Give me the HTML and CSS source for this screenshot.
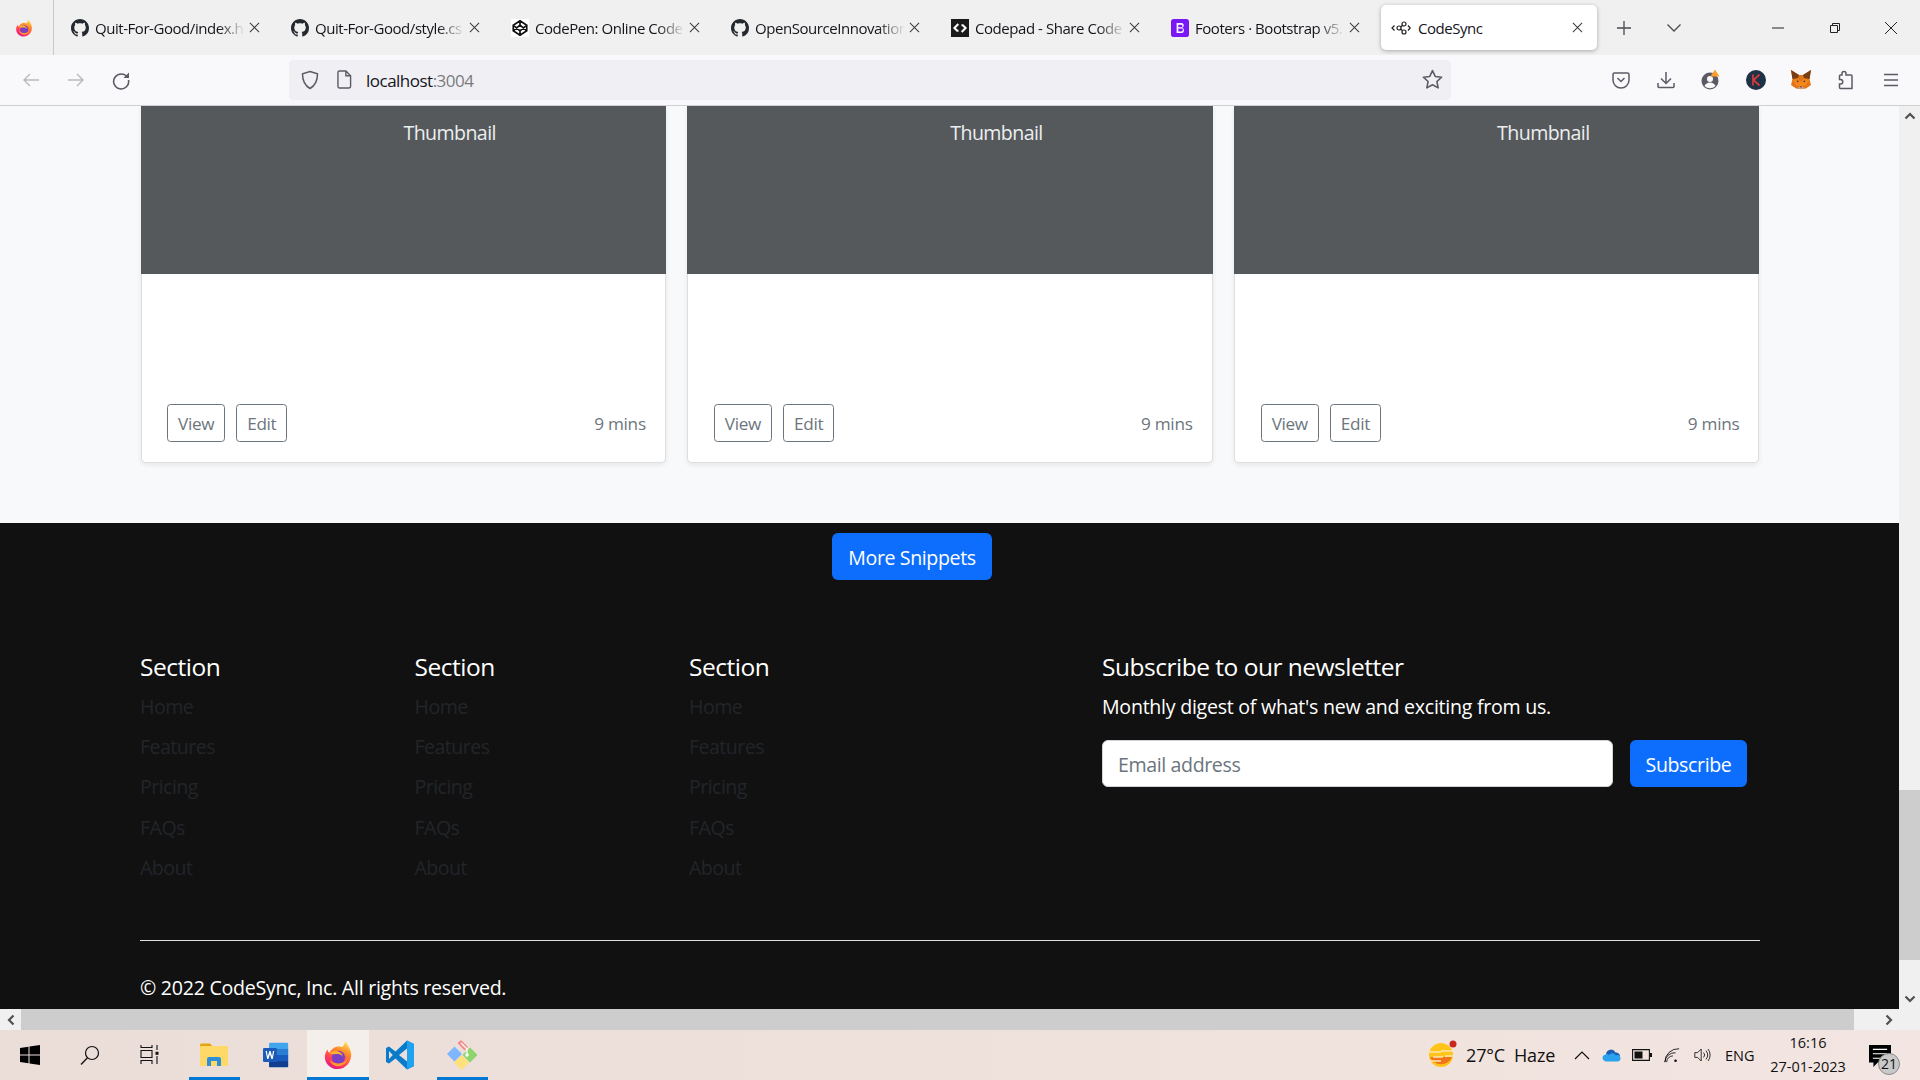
FILE: index.html
```html
<!DOCTYPE html>
<html lang="en">
<head>
<meta charset="utf-8">
<title>CodeSync</title>
<link rel="stylesheet" href="styles.css">
</head>
<body>
<svg class="defs" width="0" height="0" aria-hidden="true">
  <defs>
    <linearGradient id="ffg" x1="0.75" y1="0" x2="0.3" y2="1">
      <stop offset="0" stop-color="#ffe14d"/><stop offset="0.35" stop-color="#ff8a2a"/><stop offset="0.72" stop-color="#ff3d5a"/><stop offset="1" stop-color="#e31587"/>
    </linearGradient>
    <symbol id="gh" viewBox="0 0 16 16"><path fill="#24292f" d="M8 0C3.58 0 0 3.58 0 8c0 3.54 2.29 6.53 5.47 7.59.4.07.55-.17.55-.38 0-.19-.01-.82-.01-1.49-2.01.37-2.53-.49-2.69-.94-.09-.23-.48-.94-.82-1.13-.28-.15-.68-.52-.01-.53.63-.01 1.08.58 1.23.82.72 1.21 1.87.87 2.33.66.07-.52.28-.87.51-1.07-1.78-.2-3.64-.89-3.64-3.95 0-.87.31-1.59.82-2.15-.08-.2-.36-1.02.08-2.12 0 0 .67-.21 2.2.82.64-.18 1.32-.27 2-.27s1.36.09 2 .27c1.53-1.04 2.2-.82 2.2-.82.44 1.1.16 1.92.08 2.12.51.56.82 1.27.82 2.15 0 3.07-1.87 3.75-3.65 3.95.29.25.54.73.54 1.48 0 1.07-.01 1.93-.01 2.2 0 .21.15.46.55.38A8 8 0 0 0 16 8c0-4.42-3.58-8-8-8z"/></symbol>
    <symbol id="x" viewBox="0 0 12 12"><path d="M1 1l10 10M11 1L1 11" stroke="#3a3a3c" stroke-width="1.1" fill="none"/></symbol>
    <symbol id="ff" viewBox="0 0 32 32">
      <path fill="url(#ffg)" d="M24 1c.5 3 5 6 6 13 1 9-6 17-14.500 17C8 31 2 25 2 18c0-3 1-6 3-8 0 2 1 3 2 3.500C9 9 14 6 18 7c3 1 4 0 6-6z"/>
      <circle cx="16.500" cy="18.500" r="7" fill="#7a3fc4"/>
      <path fill="#ffb02a" d="M7 14c3-3 8-3 11-1 2 1 3 3 3 5-1-2-3-3-5-3-3 0-6 1-9-1z"/>
      <path fill="#ff9a2a" d="M7 21c1 4 5 7 9 7 5 0 9-3 10-8-2 3-5 5-9 5-4 0-7-1-10-4z"/>
    </symbol>
  </defs>
</svg>

<div class="tabbar">
  <div class="ff-cell"><svg class="i18" viewBox="0 0 32 32"><use href="#ff"/></svg></div>
  <div class="tab"><svg class="fav" viewBox="0 0 16 16"><use href="#gh"/></svg><span class="tab-title">Quit-For-Good/index.h</span><svg class="tab-x" viewBox="0 0 12 12"><use href="#x"/></svg></div>
  <div class="tab"><svg class="fav" viewBox="0 0 16 16"><use href="#gh"/></svg><span class="tab-title">Quit-For-Good/style.cs</span><svg class="tab-x" viewBox="0 0 12 12"><use href="#x"/></svg></div>
  <div class="tab"><svg class="fav" viewBox="0 0 16 16"><rect width="16" height="16" fill="#fff"/><path d="M8 1.500l6 4v5l-6 4-6-4v-5z M8 1.500v4 M8 10.500v4 M2 5.500l6 5 6-5 M2 10.500l6-5 6 5" fill="none" stroke="#111" stroke-width="1.500"/></svg><span class="tab-title">CodePen: Online Code</span><svg class="tab-x" viewBox="0 0 12 12"><use href="#x"/></svg></div>
  <div class="tab"><svg class="fav" viewBox="0 0 16 16"><use href="#gh"/></svg><span class="tab-title">OpenSourceInnovation</span><svg class="tab-x" viewBox="0 0 12 12"><use href="#x"/></svg></div>
  <div class="tab"><svg class="fav" viewBox="0 0 16 16"><rect width="16" height="16" fill="#1a1a1a"/><path d="M6.500 4.500L3 8l2.500 2.500h1.200M9.500 11.500L13 8l-2.500-2.500H9.300" fill="none" stroke="#fff" stroke-width="1.800"/></svg><span class="tab-title">Codepad - Share Code</span><svg class="tab-x" viewBox="0 0 12 12"><use href="#x"/></svg></div>
  <div class="tab"><svg class="fav" viewBox="0 0 16 16"><rect width="16" height="16" rx="2.500" fill="#7a18f5"/><path d="M5 3.500h4a2.200 2.200 0 0 1 .8 4.300A2.400 2.400 0 0 1 9.300 12.500H5zM6.500 5v2.300H9a1.150 1.150 0 0 0 0-2.300zM6.500 8.500V11H9.300a1.250 1.250 0 0 0 0-2.500z" fill="#fff" fill-rule="evenodd"/></svg><span class="tab-title">Footers · Bootstrap v5.</span><svg class="tab-x" viewBox="0 0 12 12"><use href="#x"/></svg></div>
  <div class="tab tab-active"><svg class="fav" viewBox="0 0 20 16"><g fill="none" stroke="#222" stroke-width="1.200"><circle cx="8" cy="8" r="2"/><circle cx="13" cy="4" r="2"/><circle cx="13" cy="12" r="2"/><path d="M9.700 7l1.700-1.700M9.700 9l1.700 1.700M3.500 5.500L1 8l2.500 2.500M17 5.500L19.200 8 17 10.500"/></g></svg><span class="tab-title tab-title-plain">CodeSync</span><svg class="tab-x" viewBox="0 0 12 12"><use href="#x"/></svg></div>
  <div class="tab-tool tool-plus"><svg class="i14" viewBox="0 0 14 14"><path d="M7 0v14M0 7h14" stroke="#4a4a4f" stroke-width="1.300"/></svg></div>
  <div class="tab-tool"><svg class="i14" viewBox="0 0 14 14"><path d="M.5 3.500L7 10l6.500-6.500" stroke="#4a4a4f" stroke-width="1.300" fill="none"/></svg></div>
  <div class="win-btns">
    <div class="win-btn"><svg class="i14" viewBox="0 0 14 14"><path d="M1 7h12" stroke="#222" stroke-width="1"/></svg></div>
    <div class="win-btn"><svg class="i14" viewBox="0 0 14 14"><path d="M2.500 4.500h7v7h-7zM4.500 4.500v-2h7v7h-2" stroke="#222" stroke-width="1" fill="none"/></svg></div>
    <div class="win-btn"><svg class="i14" viewBox="0 0 14 14"><path d="M1 1l12 12M13 1L1 13" stroke="#222" stroke-width="1"/></svg></div>
  </div>
</div>

<div class="toolbar">
  <div class="tb-btn"><svg class="i20" viewBox="0 0 20 20"><path d="M18 10H3M9 4l-6 6 6 6" stroke="#b9b9bd" stroke-width="1.400" fill="none"/></svg></div>
  <div class="tb-btn"><svg class="i20" viewBox="0 0 20 20"><path d="M2 10h15M11 4l6 6-6 6" stroke="#b9b9bd" stroke-width="1.400" fill="none"/></svg></div>
  <div class="tb-btn"><svg class="i20" viewBox="0 0 20 20"><path d="M16.500 7.500A7.500 7.500 0 1 0 17.500 10" stroke="#5b5b66" stroke-width="1.600" fill="none"/><path d="M18 2.500V8h-5.500z" fill="#5b5b66"/></svg></div>
  <div class="urlbar">
    <svg class="url-shield" viewBox="0 0 20 20"><path d="M10 1.500l7.500 2.300c0 7-2 11.700-7.500 14.700C4.500 15.500 2.500 10.800 2.500 3.800z" fill="none" stroke="#5b5b66" stroke-width="1.500"/></svg>
    <svg class="url-page" viewBox="0 0 16 20"><path d="M2.500 1h7l5 5v11a2 2 0 0 1-2 2h-10a1.500 1.500 0 0 1-1.500-1.500V2.500A1.500 1.500 0 0 1 2.500 1zM9.500 1v5h5" fill="none" stroke="#5b5b66" stroke-width="1.500"/></svg>
    <span class="url-text">localhost<span class="url-port">:3004</span></span>
    <svg class="url-star" viewBox="0 0 20 20"><path d="M10 1.500l2.600 5.600 6.100.7-4.500 4.100 1.200 6.100-5.400-3-5.400 3 1.200-6.100L1.300 7.800l6.100-.7z" fill="none" stroke="#5b5b66" stroke-width="1.500" stroke-linejoin="round"/></svg>
  </div>
  <div class="tb-right">
    <div class="tb-btn"><svg class="i18" viewBox="0 0 18 18"><path d="M2.500 2h13A1.500 1.500 0 0 1 17 3.500V9A8 8 0 0 1 1 9V3.500A1.500 1.500 0 0 1 2.500 2z" fill="none" stroke="#5b5b66" stroke-width="1.500"/><path d="M5.500 7L9 10.500 12.500 7" fill="none" stroke="#5b5b66" stroke-width="1.500"/></svg></div>
    <div class="tb-btn"><svg class="i20" viewBox="0 0 20 20"><path d="M10 2v11M5 8.500l5 5 5-5M2 13v3.500a1 1 0 0 0 1 1h14a1 1 0 0 0 1-1V13" stroke="#5b5b66" stroke-width="1.500" fill="none"/></svg></div>
    <div class="tb-btn"><svg class="i22" viewBox="0 0 22 22"><circle cx="10" cy="12" r="8.500" fill="#5b5b66"/><circle cx="10" cy="10" r="3" fill="#f9f9fb"/><path d="M4.500 17a6 6 0 0 1 11 0 8 8 0 0 1-11 0z" fill="#f9f9fb"/><path d="M15 0.500l4.500 7h-9z" fill="#ff9e2c"/></svg></div>
    <div class="tb-btn"><svg class="i20" viewBox="0 0 20 20"><circle cx="10" cy="10" r="10" fill="#1f3245"/><path d="M7 4.500v11M13.500 4.500L7.500 10l6 5.500" stroke="#d93a3a" stroke-width="1.700" fill="none"/></svg></div>
    <div class="tb-btn"><svg class="i22" viewBox="0 0 22 22"><path fill="#e2761b" d="M1 1l8 5h4l8-5-1.500 9 1.500 6-5 3.500-4 .5h-2l-4-.5L1 16l1.500-6z"/><path fill="#763d16" d="M1 1l8 5-1 3-5.500 1zM21 1l-8 5 1 3 5.500 1z"/><path fill="#f6851b" d="M3 11l5-1 3 3 3-3 5 1-3 5-5 2-5-2z"/><path fill="#c0ad9e" d="M8 19l3 1.500 3-1.500-1-1h-4z"/><path fill="#233447" d="M6.500 11.500L9 12l-1.500 1.200zM15.500 11.500L13 12l1.500 1.200zM10 17.500h2L11 19z"/></svg></div>
    <div class="tb-btn"><svg class="i20" viewBox="0 0 20 20"><path d="M8 1.500a2 2 0 0 1 2 2V5h5a1 1 0 0 1 1 1v12.500H4.500a1 1 0 0 1-1-1V14h1a2.200 2.200 0 0 0 0-4.500h-1V6a1 1 0 0 1 1-1H6V3.500a2 2 0 0 1 2-2z" fill="none" stroke="#5b5b66" stroke-width="1.500"/></svg></div>
    <div class="tb-btn"><svg class="i18" viewBox="0 0 18 18"><path d="M2 3.500h14M2 9h14M2 14.500h14" stroke="#5b5b66" stroke-width="1.500"/></svg></div>
  </div>
</div>

<div class="viewport">
  <div class="page">
    <main class="album">
      <article class="card">
        <div class="thumb">Thumbnail</div>
        <div class="card-body"><div class="btn-group"><button class="btn-line">View</button><button class="btn-line">Edit</button></div><small class="mins">9 mins</small></div>
      </article>
      <article class="card">
        <div class="thumb">Thumbnail</div>
        <div class="card-body"><div class="btn-group"><button class="btn-line">View</button><button class="btn-line">Edit</button></div><small class="mins">9 mins</small></div>
      </article>
      <article class="card">
        <div class="thumb">Thumbnail</div>
        <div class="card-body"><div class="btn-group"><button class="btn-line">View</button><button class="btn-line">Edit</button></div><small class="mins">9 mins</small></div>
      </article>
    </main>
    <footer class="footer">
      <button class="btn-blue btn-more">More Snippets</button>
      <div class="foot-grid">
        <section><h5 class="foot-h">Section</h5><ul class="foot-links"><li>Home</li><li>Features</li><li>Pricing</li><li>FAQs</li><li>About</li></ul></section>
        <section><h5 class="foot-h">Section</h5><ul class="foot-links"><li>Home</li><li>Features</li><li>Pricing</li><li>FAQs</li><li>About</li></ul></section>
        <section><h5 class="foot-h">Section</h5><ul class="foot-links"><li>Home</li><li>Features</li><li>Pricing</li><li>FAQs</li><li>About</li></ul></section>
        <section class="news">
          <h5 class="foot-h">Subscribe to our newsletter</h5>
          <p class="news-p">Monthly digest of what's new and exciting from us.</p>
          <div class="news-form"><input class="news-input" placeholder="Email address"><button class="btn-blue btn-sub">Subscribe</button></div>
        </section>
      </div>
      <div class="foot-bottom">© 2022 CodeSync, Inc. All rights reserved.</div>
    </footer>
  </div>
  <div class="vscroll">
    <svg class="sc-arrow" viewBox="0 0 12 8"><path d="M1.500 6.500L6 2l4.500 4.500" stroke="#505050" stroke-width="2.200" fill="none"/></svg>
    <div class="vthumb"></div>
    <svg class="sc-arrow" viewBox="0 0 12 8"><path d="M1.500 1.500L6 6l4.500-4.500" stroke="#505050" stroke-width="2.200" fill="none"/></svg>
  </div>
</div>

<div class="hscroll">
  <div class="h-end"><svg class="sc-arrow-h" viewBox="0 0 8 12"><path d="M6.500 1.500L2 6l4.500 4.500" stroke="#505050" stroke-width="2.200" fill="none"/></svg></div>
  <div class="hthumb"></div>
  <div class="h-rest"><svg class="sc-arrow-h" viewBox="0 0 8 12"><path d="M1.500 1.500L6 6l-4.500 4.500" stroke="#505050" stroke-width="2.200" fill="none"/></svg></div>
</div>

<div class="taskbar">
  <div class="task-cell"><svg class="i20" viewBox="0 0 20 20"><path fill="#000" d="M0 3l8.500-1.200V9.500H0zM9.500 1.600L20 0v9.500H9.500zM0 10.500h8.500v7.700L0 17zM9.500 10.500H20V20L9.500 18.400z"/></svg></div>
  <div class="task-cell"><svg class="i20" viewBox="0 0 20 20"><circle cx="12" cy="8" r="6.500" fill="none" stroke="#111" stroke-width="1.200"/><path d="M7.500 12.800L1 19.500" stroke="#111" stroke-width="1.300"/></svg></div>
  <div class="task-cell"><svg class="i20" viewBox="0 0 20 20"><path d="M1 0v2.500h11V0M1 5.500h11v7H1zM1 19v-3.500h11V19M17 0v5M17 11v8" fill="none" stroke="#111" stroke-width="1.100"/><rect x="15.500" y="6.800" width="3" height="3" fill="#111"/></svg></div>
  <div class="task-app task-first task-open"><svg class="i28" viewBox="0 0 28 24"><path fill="#e5a50f" d="M0 2a1.500 1.500 0 0 1 1.500-1.500H10L13 4H0z"/><rect y="3" width="28" height="20" rx="1" fill="#ffd968"/><path fill="#2f8fd8" d="M7 23v-7a2 2 0 0 1 2-2h10a2 2 0 0 1 2 2v7h-4v-5h-6v5z"/></svg></div>
  <div class="task-app"><svg class="i28" viewBox="0 0 30 30"><rect x="7" y="1" width="22" height="28" rx="1.500" fill="#41a5ee"/><rect x="7" y="8" width="22" height="7" fill="#2b7cd3"/><rect x="7" y="15" width="22" height="7" fill="#185abd"/><rect x="7" y="22" width="22" height="7" fill="#103f91"/><rect x="0" y="7" width="16" height="16" rx="1.500" fill="#1b5ab8"/><path d="M3 10.500l1.800 9h1.500L8 14l1.700 5.500h1.500l1.800-9h-1.500l-1 6-1.800-6H7.300l-1.800 6-1-6z" fill="#fff"/></svg></div>
  <div class="task-app task-active task-open"><svg class="i30" viewBox="0 0 32 32"><use href="#ff"/></svg></div>
  <div class="task-app"><svg class="i30" viewBox="0 0 30 30"><path fill="#0a7acb" d="M22 .5L10.500 11.500 4 6.500 1 8v14l3 1.500 6.500-5L22 29.500 29 26V4zM22 8.500v13l-8-6.500zM4 11l3.800 4L4 19z"/><path fill="#1fa2f0" d="M22 .5L29 4v22l-7 3.500z"/></svg></div>
  <div class="task-app task-open"><svg class="i30" viewBox="0 0 30 30"><path fill="#f48a8a" d="M10.500 3L14 0l7 7-3.500 3.500z"/><path fill="#8dd46a" d="M23 7.500l7.500 7.500L23 22.500 15.500 15z"/><path fill="#ffe07a" d="M14.500 15l7.500 7.500-7.500 7.500L7 22.500z"/><path fill="#7eb6ff" d="M7.500 6.500L15 14l-7.500 7.500L0 14z"/><path d="M14 3l6 6v6" stroke="#fff" stroke-width="1.200" fill="none"/><circle cx="20" cy="15" r="1.800" fill="#fff"/></svg></div>
  <div class="tray">
    <div class="weather"><svg class="i30" viewBox="0 0 30 30"><circle cx="14" cy="15" r="12" fill="#ffc41a"/><path fill="#f0751a" d="M3 17h22a12 12 0 0 1-22 0z"/><path d="M0 12h14M6 17h10M2 21h12M14 11h13M18 16h8" stroke="#fde5b0" stroke-width="1.600"/><circle cx="26" cy="4" r="3.500" fill="#c6281e"/></svg><span class="temp">27°C</span><span>Haze</span></div>
    <div class="tray-ic ic-chev"><svg class="i16" viewBox="0 0 16 10"><path d="M1 9l7-7 7 7" stroke="#111" stroke-width="1.200" fill="none"/></svg></div>
    <div class="tray-ic"><svg class="i20" viewBox="0 0 20 14"><path fill="#1d5fb5" d="M4 6a5 5 0 0 1 9.500-1.500A4 4 0 0 1 18 8H5z"/><path fill="#2ba2ee" d="M3.500 13.500A3.500 3.500 0 0 1 3 6.700a3 3 0 0 1 4 .3 4 4 0 0 1 7 .5 3 3 0 0 1 4.500 3c0 1.500-1 3-3 3z"/></svg></div>
    <div class="tray-ic"><svg class="i20" viewBox="0 0 20 12"><path d="M.6.600h16.800v10.800H.6z" fill="none" stroke="#111" stroke-width="1.100"/><rect x="2.500" y="2.500" width="8" height="7" fill="#111"/><rect x="18" y="4" width="2" height="4" fill="#111"/></svg></div>
    <div class="tray-ic"><svg class="i18" viewBox="0 0 18 18"><path d="M1 17A15 15 0 0 1 17 2M1 17a11 11 0 0 1 12-10.500M3 17a7 7 0 0 1 7-7" stroke="#111" fill="none"/><circle cx="13" cy="15.500" r="1.500" fill="#111"/></svg></div>
    <div class="tray-ic"><svg class="i20" viewBox="0 0 20 20"><path d="M1 7h3.500L9 2.500v15L4.500 13H1zM12 7a4.500 4.500 0 0 1 0 6M15 4.500a9 9 0 0 1 0 11M17.500 2.500a12 12 0 0 1 0 15" fill="none" stroke="#111" stroke-width="1.050"/></svg></div>
    <div class="lang">ENG</div>
    <div class="clock"><span>16:16</span><span>27-01-2023</span></div>
    <div class="notif"><svg class="i22" viewBox="0 0 20 20"><path d="M0 0h20v16H8l-4 4v-4H0z" fill="#000"/><path d="M3.500 4h13M3.500 8h13M3.500 12h13" stroke="#fff"/></svg><span class="notif-badge">21</span></div>
  </div>
</div>
</body>
</html>
```
FILE: styles.css
```css
* { box-sizing: border-box; }
html, body { margin: 0; height: 100%; }
body {
  width: 1920px;
  height: 1080px;
  overflow: hidden;
  display: flex;
  flex-direction: column;
  font-family: "Open Sans", "Noto Sans", sans-serif;
  letter-spacing: -0.0165em;
  color: #15141a;
  background: #fff;
}
.defs { position: absolute; }
svg { display: block; flex: none; }
.i14 { width: 14px; height: 14px; }
.i16 { width: 16px; height: 10px; }
.i18 { width: 18px; height: 18px; }
.i20 { width: 20px; height: 20px; }
.i22 { width: 22px; height: 22px; }
.i28 { width: 28px; height: 26px; }
.i30 { width: 30px; height: 30px; }

/* tab strip */
.tabbar { height: 55px; display: flex; align-items: center; flex: none; background: #f0f0f0; }
.ff-cell { width: 60px; height: 55px; display: flex; align-items: center; padding-left: 15px; background: linear-gradient(#c9c9c9, #c9c9c9) 53px 0 / 1px 55px no-repeat; }
.tab { width: 220px; height: 45px; display: flex; align-items: center; padding-left: 11px; font-size: 15px; letter-spacing: -0.03em; }
.fav { width: 18px; height: 18px; margin-right: 6px; }
.tab-title {
  width: 150px; white-space: nowrap; overflow: hidden;
  -webkit-mask-image: linear-gradient(to right, #000 82%, transparent 100%);
  mask-image: linear-gradient(to right, #000 82%, transparent 100%);
}
.tab-title-plain { -webkit-mask-image: none; mask-image: none; }
.tab-x { width: 11px; height: 11px; margin-left: 4px; }
.tab-active { width: 216px; margin-left: 1px; background: #fff; border-radius: 5px; box-shadow: 0 1px 4px rgba(0,0,0,.3); padding-left: 10px; }
.tab-active .fav { width: 20px; margin-right: 7px; }
.tab-tool { width: 50px; display: flex; justify-content: center; }
.tool-plus { margin-left: 2px; }
.win-btns { display: flex; margin-left: 51px; }
.win-btn { width: 56.500px; display: flex; justify-content: center; }

/* toolbar */
.toolbar { height: 51px; background: #f9f9fb; border-bottom: 1px solid #cfcfd3; display: flex; align-items: center; padding-left: 8px; flex: none; padding-bottom: 1px; }
.tb-btn { width: 45px; display: flex; justify-content: center; align-items: center; }
.urlbar { width: 1162px; height: 40px; margin-left: 146px; background: #f0f0f4; border-radius: 4px; display: flex; align-items: center; padding-left: 11px; }
.url-shield { width: 20px; height: 20px; }
.url-page { width: 15px; height: 19px; margin-left: 17px; }
.url-text { font-size: 17px; margin-left: 14px; flex: 1; color: #15141a; letter-spacing: -0.03em; padding-top: 2px; }
.url-port { color: #7b7b80; }
.url-star { width: 21px; height: 21px; margin-right: 8px; }
.tb-right { display: flex; margin-left: 147px; }

/* content */
.viewport { height: 903px; display: flex; flex: none; }
.page { width: 1899px; height: 903px; overflow: hidden; background: #f8f9fa; color: #fff; font-size: 19.600px; }
.album { display: grid; grid-template-columns: repeat(3, 1fr); gap: 21.500px; padding: 0 139.500px 0 140.500px; height: 417px; }
.card { height: 356.500px; background: #fff; border: 1px solid rgba(0,0,0,.125); border-top: 0; border-radius: 0 0 5px 5px; box-shadow: 0 2px 5px rgba(0,0,0,.08); display: flex; flex-direction: column; }
.thumb { height: 168px; background: #55595c; color: #eceeef; text-align: center; padding: 13px 0 0 93px; line-height: 28px; margin: 0 -1px; letter-spacing: -0.03em; }
.card-body { flex: 1; display: flex; justify-content: space-between; align-items: flex-end; padding: 0 19px 19.500px 25.500px; }
.btn-group { display: flex; gap: 11px; }
.btn-line { height: 38px; padding: 1px 10px 0; background: transparent; border: 1px solid #6c757d; border-radius: 3.500px; color: #6c757d; font: inherit; font-size: 17.200px; letter-spacing: -0.02em; }
.mins { color: #6c757d; font-size: 17.200px; line-height: 40px; height: 38px; }

.footer { height: 486px; background: #111; padding: 10px 139px 0 140px; overflow: hidden; }
.btn-blue { background: #0d6efd; border: 0; border-radius: 6px; color: #fff; font: inherit; letter-spacing: -0.02em; padding: 2px 0 0; }
.btn-more { width: 160px; height: 47px; margin-left: 692px; display: block; }
.foot-grid { display: grid; grid-template-columns: repeat(3, 274.500px) 1fr; margin-top: 72px; height: 288px; }
.foot-h { margin: 0 0 5px; font-size: 24.500px; font-weight: 400; line-height: 30px; color: #fff; letter-spacing: -0.02em; }
.foot-links { list-style: none; margin: 0; padding: 0; color: #212529; line-height: 40.200px; letter-spacing: -0.028em; }
.news { padding-left: 138.500px; }
.news-p { margin: 0; line-height: 40px; color: #fff; }
.news-form { display: flex; gap: 17px; margin-top: 13px; }
.news-input { width: 511px; height: 47px; padding: 2px 15px 0; border: 1px solid #ced4da; border-radius: 6px; background: #fff; font: inherit; letter-spacing: -0.02em; }
.news-input::placeholder { color: #6c757d; opacity: 1; }
.btn-sub { width: 117px; height: 47px; }
.foot-bottom { border-top: 1px solid #dee2e6; padding-top: 32px; line-height: 30px; color: #fff; }

/* scrollbars */
.vscroll { width: 21px; height: 903px; background: #f0f0f0; display: flex; flex-direction: column; align-items: center; justify-content: space-between; padding: 6px 0; position: relative; }
.sc-arrow { width: 12px; height: 8px; }
.vthumb { position: absolute; left: 0; top: 684px; width: 21px; height: 170px; background: #cdcdcd; }
.hscroll { height: 21px; display: flex; flex: none; background: #f0f0f0; }
.h-end { width: 21px; display: flex; align-items: center; justify-content: center; }
.hthumb { width: 1833px; background: #cdcdcd; }
.h-rest { flex: 1; display: flex; align-items: center; padding-left: 31px; }
.sc-arrow-h { width: 8px; height: 12px; }

/* taskbar */
.taskbar { height: 50px; flex: none; display: flex; align-items: center; background: linear-gradient(to right, #ebddd8, #eee0da 50%, #f3e6e2); color: #111; letter-spacing: -0.01em; }
.task-cell { width: 60px; height: 50px; display: flex; align-items: center; justify-content: center; }
.task-app { width: 62px; height: 50px; display: flex; align-items: center; justify-content: center; }
.task-first { margin-left: 3px; }
.task-open { background: linear-gradient(#0078d4, #0078d4) center bottom / 51px 3px no-repeat; }
.task-active { background: linear-gradient(#0078d4, #0078d4) center bottom / 100% 3px no-repeat, #f5efec; }
.tray { display: flex; align-items: center; margin-left: auto; height: 50px; font-size: 16px; }
.weather { display: flex; align-items: center; width: 141px; font-size: 18px; }
.temp { margin-left: 9px; width: 48px; }
.tray-ic { width: 30px; display: flex; justify-content: center; }
.tray-ic svg { height: 16px; }
.ic-chev { margin-left: -1px; }
.lang { margin-left: 8px; width: 40px; font-size: 14.500px; letter-spacing: 0; }
.clock { width: 92px; margin-left: -3px; display: flex; flex-direction: column; align-items: center; font-size: 14.500px; line-height: 24px; letter-spacing: 0; }
.notif { width: 64px; height: 50px; padding: 15px 0 0 13px; position: relative; margin-left: 2px; }
.notif-badge { position: absolute; left: 22px; top: 23px; width: 22px; height: 22px; border-radius: 50%; background: #c9c9c9; border: 1px solid #8a8a8a; font-size: 14px; line-height: 20px; text-align: center; color: #111; letter-spacing: 0; }
```
